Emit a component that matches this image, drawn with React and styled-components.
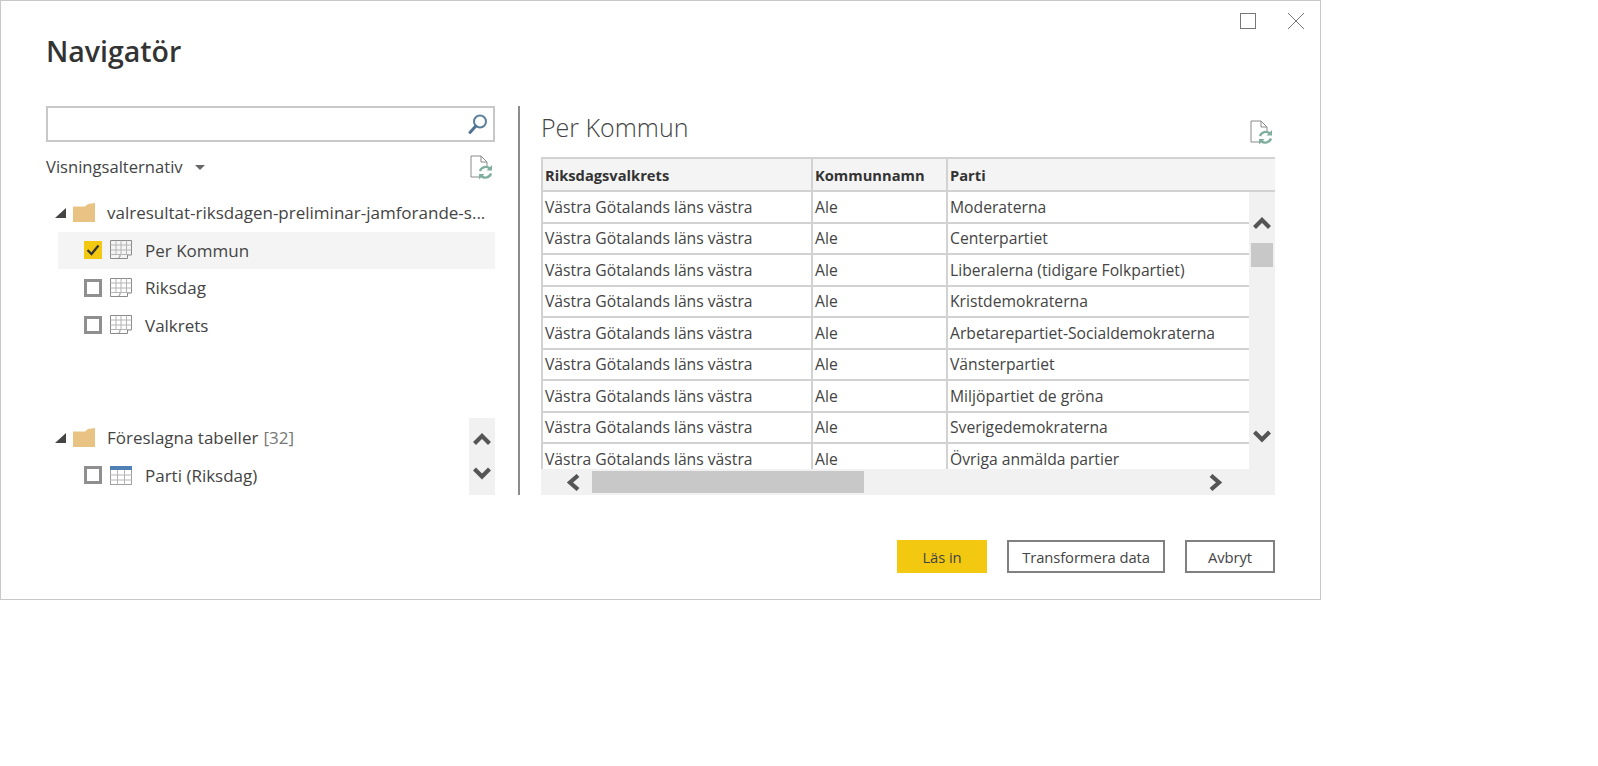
import React from "react";
import styled, { createGlobalStyle } from "styled-components";

const GlobalStyle = createGlobalStyle`
  html, body {
    margin: 0;
    background: #fff;
    font-family: "Open Sans", "Noto Sans", "Liberation Sans", sans-serif;
    color: #444;
  }
  * { box-sizing: border-box; }
`;

const Dialog = styled.div`
  width: 1321px;
  height: 600px;
  border: 1px solid #c8c8c8;
  padding: 12px 45px 0;
  display: flex;
  flex-direction: column;
`;

const WindowControls = styled.div`
  display: flex;
  justify-content: flex-end;
  gap: 32px;
  margin-right: -29px;
  height: 16px;
`;

const Title = styled.h1`
  margin: 4px 0 0;
  font-size: 28.5px;
  line-height: 36px;
  font-weight: 600;
  color: #333;
`;

const Body = styled.div`
  display: flex;
  height: 389px;
  margin-top: 37px;
`;

const LeftColumn = styled.div`
  width: 449px;
  display: flex;
  flex-direction: column;
`;

const SearchBox = styled.div`
  height: 36px;
  border: 2px solid #c8c8c8;
  display: flex;
  align-items: center;
  justify-content: flex-end;
  padding-right: 5px;
`;

const OptionsRow = styled.div`
  height: 25px;
  margin-top: 13px;
  display: flex;
  align-items: center;
  justify-content: space-between;
  padding-right: 2px;
`;

const OptionsLabel = styled.span`
  font-size: 16.6px;
  padding-bottom: 3px;
  display: flex;
  align-items: center;
  gap: 12px;
`;

const Caret = styled.span`
  width: 0;
  height: 0;
  margin-top: 3px;
  border-left: 5px solid transparent;
  border-right: 5px solid transparent;
  border-top: 5px solid #666;
`;

const Tree = styled.div`
  margin-top: 14px;
`;

const GroupRow = styled.div`
  height: 37.5px;
  padding-left: 9px;
  display: flex;
  align-items: center;
  font-size: 17px;
  white-space: nowrap;
`;

const Triangle = styled.span`
  width: 0;
  height: 0;
  border-left: 11px solid transparent;
  border-bottom: 10px solid #444;
  margin-right: 7px;
`;

const GroupName = styled.span`
  margin-left: 12px;
`;

const Count = styled.span`
  color: #777;
  margin-left: 5px;
`;

const ItemRow = styled.div`
  height: 37.5px;
  margin-left: 12px;
  padding-left: 26px;
  display: flex;
  align-items: center;
  gap: 8px;
  font-size: 17px;
  background: ${(p) => (p.$selected ? "#f4f4f4" : "transparent")};
`;

const Checkbox = styled.span`
  width: 18px;
  height: 18px;
  flex: none;
  display: flex;
  align-items: center;
  justify-content: center;
  background: ${(p) => (p.$checked ? "#f2c811" : "#fff")};
  border: ${(p) => (p.$checked ? "none" : "3px solid #8f8f8f")};
`;

const ItemLabel = styled.span`
  margin-left: 5px;
`;

const SuggestedSection = styled.div`
  margin-top: auto;
  display: flex;
  height: 77px;
`;

const SuggestedList = styled.div`
  flex: 1;
  margin-top: 1px;
`;

const SideScroll = styled.div`
  width: 26px;
  background: #f1f1f1;
  display: flex;
  flex-direction: column;
  align-items: center;
  justify-content: space-between;
  padding: 13px 0 14px;
`;

const Divider = styled.div`
  width: 2px;
  margin: 0 21px 0 23px;
  background: #8c8c8c;
`;

const RightColumn = styled.div`
  width: 734px;
  display: flex;
  flex-direction: column;
`;

const PreviewHead = styled.div`
  height: 51px;
  display: flex;
  justify-content: space-between;
  padding: 4px 2px 0 0;
`;

const PreviewTitle = styled.h2`
  margin: 0;
  font-size: 25px;
  line-height: 34px;
  font-weight: 300;
  color: #444;
`;

const RefreshSlot = styled.span`
  margin-top: 10px;
`;

const TableFrame = styled.div`
  height: 338px;
  display: flex;
  flex-direction: column;
`;

const Grid = styled.div`
  display: grid;
  grid-template-columns: 708px 26px;
  grid-template-rows: 35px 277px;
`;

const HeaderRow = styled.div`
  grid-column: 1 / 3;
  display: grid;
  grid-template-columns: 270px 135px 1fr;
  background: #f4f4f4;
  border-top: 2px solid #d2d2d2;
  border-bottom: 2px solid #d2d2d2;
  font-weight: 700;
  font-size: 14.7px;
  color: #333;
`;

const DataArea = styled.div`
  display: flex;
  overflow: hidden;
  flex-direction: column;
`;

const DataRow = styled.div`
  flex: none;
  height: 31.5px;
  display: grid;
  grid-template-columns: 270px 135px 1fr;
  border-bottom: 2px solid #d2d2d2;
  font-size: 15.7px;
`;

const Cell = styled.div`
  border-left: 2px solid #d2d2d2;
  padding-left: 2px;
  display: flex;
  align-items: center;
  white-space: nowrap;
  overflow: hidden;
`;

const VScroll = styled.div`
  background: #f1f1f1;
  display: flex;
  flex-direction: column;
  align-items: center;
  padding-top: 23px;
`;

const VThumb = styled.div`
  width: 22px;
  height: 24px;
  margin-top: 13px;
  background: #c8c8c8;
`;

const VDown = styled.div`
  margin-top: auto;
  margin-bottom: 25px;
  display: flex;
`;

const HScroll = styled.div`
  height: 26px;
  background: #f1f1f1;
  display: flex;
  align-items: center;
  padding-left: 23px;
`;

const HThumb = styled.div`
  width: 272px;
  height: 22px;
  margin-left: 12px;
  background: #c8c8c8;
`;

const HRight = styled.div`
  margin-left: 345px;
  display: flex;
`;

const Footer = styled.div`
  margin-top: 45px;
  display: flex;
  justify-content: flex-end;
  gap: 20px;
`;

const Button = styled.button`
  height: 33px;
  width: ${(p) => p.$width}px;
  padding: 0;
  font-family: inherit;
  font-size: 14.8px;
  letter-spacing: -0.1px;
  color: #444;
  background: ${(p) => (p.$primary ? "#f2c811" : "#fff")};
  border: ${(p) => (p.$primary ? "none" : "2px solid #808080")};
`;

const TableIcon = ({ plain }) =>
  plain ? (
    <svg width="22" height="19" viewBox="0 0 22 19" fill="none">
      <rect x="0.5" y="0.5" width="21" height="18" fill="#fff" stroke="#a0a0a0" />
      <rect x="0" y="0" width="22" height="4" fill="#4f81b5" />
      <path d="M0 9h22M0 14h22M7.500 4v15M14.500 4v15" stroke="#b4b4b4" />
    </svg>
  ) : (
    <svg width="22" height="20" viewBox="0 0 22 20" fill="none" stroke="#8a8a8a">
      <path d="M.5.5h21v14.500h-4v3.500H.5z" />
      <path d="M.5 5h21M.5 10h21M.5 14.500h21M6 .5v14M11 .5v14M16.500 .5v14" stroke="#b4b4b4" />
      <path d="M10 15v1c0 2-2 2.500-3.500 2.500" />
    </svg>
  );

const FolderIcon = () => (
  <svg width="22" height="19" viewBox="0 0 22 19">
    <path d="M0 3.500h12L15 1l7-1v19H0z" fill="#e8c384" />
  </svg>
);

const RefreshDoc = () => (
  <svg width="23" height="25" viewBox="0 0 23 25" fill="none">
    <path d="M9 22H1V1h10l6 6v4M11 1v6h6" stroke="#8a8a8a" strokeWidth="1" />
    <path
      d="M10 16a6 6 0 0 1 9.800-2.500M21 18.500a6 6 0 0 1-9.800 2.500"
      stroke="#7fae9d"
      strokeWidth="2.400"
    />
    <path d="M22 10v5.500h-5.500zM9 24.500V19h5.500z" fill="#7fae9d" />
  </svg>
);

const SearchIcon = () => (
  <svg width="20" height="22" viewBox="0 0 20 22" fill="none">
    <circle cx="12" cy="8.500" r="6" stroke="#5a7f9c" strokeWidth="2" />
    <path d="M7.800 13L2 19.500" stroke="#4f7390" strokeWidth="3" strokeLinecap="round" />
  </svg>
);

const Chevron = ({ dir }) => {
  const paths = {
    up: "M2.500 12.500L10 5l7.500 7.500",
    down: "M2.500 3L10 10.500 17.500 3",
    left: "M14 1.500L6 8.500l8 7",
    right: "M2 1.500l8 7-8 7",
  };
  const vertical = dir === "up" || dir === "down";
  return (
    <svg
      width={vertical ? 20 : 16}
      height={vertical ? 15 : 17}
      viewBox={vertical ? "0 0 20 15" : "0 0 16 17"}
      fill="none"
    >
      <path d={paths[dir]} stroke="#555" strokeWidth="4.200" />
    </svg>
  );
};

const parties = [
  "Moderaterna",
  "Centerpartiet",
  "Liberalerna (tidigare Folkpartiet)",
  "Kristdemokraterna",
  "Arbetarepartiet-Socialdemokraterna",
  "Vänsterpartiet",
  "Miljöpartiet de gröna",
  "Sverigedemokraterna",
  "Övriga anmälda partier",
];

const App = () => {
  return (
    <>
      <GlobalStyle />
      <Dialog>
        <WindowControls>
          <svg width="16" height="16" viewBox="0 0 16 16" fill="none">
            <rect x="0.5" y="0.5" width="15" height="15" stroke="#777" />
          </svg>
          <svg width="16" height="16" viewBox="0 0 16 16" fill="none">
            <path d="M0 0l16 16M16 0L0 16" stroke="#777" />
          </svg>
        </WindowControls>
        <Title>Navigatör</Title>
        <Body>
          <LeftColumn>
            <SearchBox>
              <SearchIcon />
            </SearchBox>
            <OptionsRow>
              <OptionsLabel>
                Visningsalternativ <Caret />
              </OptionsLabel>
              <RefreshDoc />
            </OptionsRow>
            <Tree>
              <GroupRow>
                <Triangle />
                <FolderIcon />
                <GroupName>valresultat-riksdagen-preliminar-jamforande-s...</GroupName>
              </GroupRow>
              <ItemRow $selected>
                <Checkbox $checked>
                  <svg width="14" height="12" viewBox="0 0 14 12" fill="none">
                    <path d="M1.500 6l4 4L12.500 1.500" stroke="#333" strokeWidth="2.200" />
                  </svg>
                </Checkbox>
                <TableIcon />
                <ItemLabel>Per Kommun</ItemLabel>
              </ItemRow>
              {["Riksdag", "Valkrets"].map((name) => (
                <ItemRow key={name}>
                  <Checkbox />
                  <TableIcon />
                  <ItemLabel>{name}</ItemLabel>
                </ItemRow>
              ))}
            </Tree>
            <SuggestedSection>
              <SuggestedList>
                <GroupRow>
                  <Triangle />
                  <FolderIcon />
                  <GroupName>
                    Föreslagna tabeller<Count>[32]</Count>
                  </GroupName>
                </GroupRow>
                <ItemRow>
                  <Checkbox />
                  <TableIcon plain />
                  <ItemLabel>Parti (Riksdag)</ItemLabel>
                </ItemRow>
              </SuggestedList>
              <SideScroll>
                <Chevron dir="up" />
                <Chevron dir="down" />
              </SideScroll>
            </SuggestedSection>
          </LeftColumn>
          <Divider />
          <RightColumn>
            <PreviewHead>
              <PreviewTitle>Per Kommun</PreviewTitle>
              <RefreshSlot>
                <RefreshDoc />
              </RefreshSlot>
            </PreviewHead>
            <TableFrame>
              <Grid>
                <HeaderRow>
                  <Cell>Riksdagsvalkrets</Cell>
                  <Cell>Kommunnamn</Cell>
                  <Cell>Parti</Cell>
                </HeaderRow>
                <DataArea>
                  {parties.map((party) => (
                    <DataRow key={party}>
                      <Cell>Västra Götalands läns västra</Cell>
                      <Cell>Ale</Cell>
                      <Cell>{party}</Cell>
                    </DataRow>
                  ))}
                </DataArea>
                <VScroll>
                  <Chevron dir="up" />
                  <VThumb />
                  <VDown>
                    <Chevron dir="down" />
                  </VDown>
                </VScroll>
              </Grid>
              <HScroll>
                <Chevron dir="left" />
                <HThumb />
                <HRight>
                  <Chevron dir="right" />
                </HRight>
              </HScroll>
            </TableFrame>
          </RightColumn>
        </Body>
        <Footer>
          <Button $primary $width={90}>Läs in</Button>
          <Button $width={158}>Transformera data</Button>
          <Button $width={90}>Avbryt</Button>
        </Footer>
      </Dialog>
    </>
  );
};

export default App;
